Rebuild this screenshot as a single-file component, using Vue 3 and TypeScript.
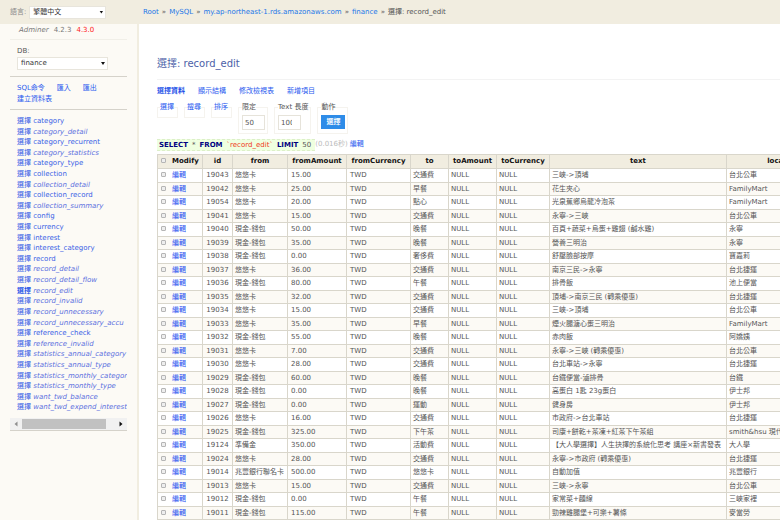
<script setup lang="ts">
import { ref } from 'vue'

interface MenuItem {
  name: string
  view?: boolean
  active?: boolean
}

const menu: MenuItem[] = [
  { name: 'category' },
  { name: 'category_detail', view: true },
  { name: 'category_recurrent' },
  { name: 'category_statistics', view: true },
  { name: 'category_type' },
  { name: 'collection' },
  { name: 'collection_detail', view: true },
  { name: 'collection_record' },
  { name: 'collection_summary', view: true },
  { name: 'config' },
  { name: 'currency' },
  { name: 'interest' },
  { name: 'interest_category' },
  { name: 'record' },
  { name: 'record_detail', view: true },
  { name: 'record_detail_flow', view: true },
  { name: 'record_edit', view: true, active: true },
  { name: 'record_invalid', view: true },
  { name: 'record_unnecessary', view: true },
  { name: 'record_unnecessary_accu', view: true },
  { name: 'reference_check' },
  { name: 'reference_invalid', view: true },
  { name: 'statistics_annual_category', view: true },
  { name: 'statistics_annual_type', view: true },
  { name: 'statistics_monthly_category', view: true },
  { name: 'statistics_monthly_type', view: true },
  { name: 'want_twd_balance', view: true },
  { name: 'want_twd_expend_interest', view: true },
]

const columns = ['id', 'from', 'fromAmount', 'fromCurrency', 'to', 'toAmount', 'toCurrency', 'text', 'location']

type Row = [number, string, string, string, string, string]

const rows: Row[] = [
  [19043, '悠悠卡', '15.00', '交通費', '三峽->頂埔', '台北公車'],
  [19042, '悠悠卡', '25.00', '早餐', '花生夾心', 'FamilyMart'],
  [19054, '悠悠卡', '20.00', '點心', '光泉蕉鄉烏龍冷泡茶', 'FamilyMart'],
  [19041, '悠悠卡', '15.00', '交通費', '永寧->三峽', '台北公車'],
  [19040, '現金-錢包', '50.00', '晚餐', '百頁+蔬菜+烏蛋+雞翅 (鹹水雞)', '永寧'],
  [19039, '現金-錢包', '35.00', '晚餐', '營養三明治', '永寧'],
  [19038, '現金-錢包', '0.00', '奢侈費', '舒壓臉部按摩', '寶嘉莉'],
  [19037, '悠悠卡', '36.00', '交通費', '南京三民->永寧', '台北捷運'],
  [19036, '現金-錢包', '80.00', '午餐', '排骨飯', '池上便當'],
  [19035, '悠悠卡', '32.00', '交通費', '頂埔->南京三民 (轉乘優惠)', '台北捷運'],
  [19034, '悠悠卡', '15.00', '交通費', '三峽->頂埔', '台北公車'],
  [19033, '悠悠卡', '35.00', '早餐', '煙火腿溏心蛋三明治', 'FamilyMart'],
  [19032, '現金-錢包', '55.00', '晚餐', '赤肉飯', '阿嬌姨'],
  [19031, '悠悠卡', '7.00', '交通費', '永寧->三峽 (轉乘優惠)', '台北公車'],
  [19030, '悠悠卡', '28.00', '交通費', '台北車站->永寧', '台北捷運'],
  [19029, '現金-錢包', '60.00', '晚餐', '台鐵便當-滷排骨', '台鐵'],
  [19028, '現金-錢包', '0.00', '晚餐', '高蛋白 1匙 23g蛋白', '伊士邦'],
  [19027, '現金-錢包', '0.00', '運動', '健身房', '伊士邦'],
  [19026, '悠悠卡', '16.00', '交通費', '市政府->台北車站', '台北捷運'],
  [19025, '現金-錢包', '325.00', '下午茶', '司康+餅乾+茶凍+紅茶下午茶組', 'smith&hsu 現代茶館'],
  [19124, '準備金', '350.00', '活動費', '【大人學選擇】人生抉擇的系統化思考 講座×新書發表', '大人學'],
  [19024, '悠悠卡', '28.00', '交通費', '永寧->市政府 (轉乘優惠)', '台北捷運'],
  [19014, '兆豐銀行聯名卡', '500.00', '悠悠卡', '自動加值', '兆豐銀行'],
  [19013, '悠悠卡', '15.00', '交通費', '三峽->永寧', '台北公車'],
  [19012, '現金-錢包', '0.00', '午餐', '家常菜+麵線', '三峽家裡'],
  [19011, '現金-錢包', '115.00', '午餐', '勁辣雞腿堡+可樂+薯條', '麥當勞'],
]

const language = ref('繁體中文')
const database = ref('finance')
const limit = ref('50')
const textLength = ref('100')
</script>

<template>
  <div class="page">
    <header class="top">
      <div class="language">
        <label for="lang">語言:</label>
        <span class="picker">
          <select id="lang" v-model="language">
            <option>繁體中文</option>
            <option>English</option>
          </select>
        </span>
      </div>
      <nav class="crumbs">
        <a href="#">Root</a><span>»</span><a href="#">MySQL</a><span>»</span>
        <a href="#">my.ap-northeast-1.rds.amazonaws.com</a><span>»</span>
        <a href="#">finance</a><span>»</span><span>選擇: record_edit</span>
      </nav>
    </header>

    <div class="body">
      <aside class="side">
        <p class="brand"><a href="#" class="logo">Adminer</a><span>4.2.3</span><a href="#" class="update">4.3.0</a></p>
        <div class="db">
          <label for="db">DB:</label>
          <span class="picker">
            <select id="db" v-model="database">
              <option>finance</option>
            </select>
          </span>
        </div>
        <p class="tools">
          <a href="#">SQL命令</a><a href="#">匯入</a><a href="#">匯出</a><a href="#">建立資料表</a>
        </p>
        <ul class="tables">
          <li v-for="item in menu" :key="item.name" :class="{ view: item.view, active: item.active }">
            <a href="#" class="pick">選擇</a> <a href="#" class="name">{{ item.name }}</a>
          </li>
        </ul>
        <div class="scroll">
          <svg viewBox="0 0 12 12"><path d="M7.5 3.5v5L4.5 6z" fill="#8f8f8f" /></svg>
          <div class="track"><div class="thumb"></div></div>
          <svg viewBox="0 0 12 12"><path d="M4.5 3.5v5L7.5 6z" fill="#111" /></svg>
        </div>
      </aside>

      <main class="content">
        <h1>選擇: record_edit</h1>
        <nav class="links">
          <a href="#" class="current">選擇資料</a><a href="#">顯示結構</a><a href="#">修改檢視表</a><a href="#">新增項目</a>
        </nav>
        <form class="filters" @submit.prevent>
          <fieldset class="closed"><legend><a href="#">選擇</a></legend></fieldset>
          <fieldset class="closed"><legend><a href="#">搜尋</a></legend></fieldset>
          <fieldset class="closed"><legend><a href="#">排序</a></legend></fieldset>
          <fieldset>
            <legend>限定</legend>
            <input v-model="limit" type="text" aria-label="限定" />
          </fieldset>
          <fieldset>
            <legend>Text 長度</legend>
            <input v-model="textLength" class="spin" type="text" aria-label="Text 長度" />
          </fieldset>
          <fieldset>
            <legend>動作</legend>
            <button type="submit">選擇</button>
          </fieldset>
        </form>
        <p class="query">
          <code><b>SELECT</b><span>*</span><b>FROM</b><i>`record_edit`</i><b>LIMIT</b><span>50</span></code>
          <span class="time">(0.016秒)</span>
          <a href="#">編輯</a>
        </p>
        <div class="grid">
          <table>
            <colgroup>
              <col class="w-modify" /><col class="w-id" /><col class="w-from" /><col class="w-amount" />
              <col class="w-currency" /><col class="w-to" /><col class="w-to-amount" /><col class="w-to-currency" />
              <col class="w-text" /><col class="w-location" />
            </colgroup>
            <thead>
              <tr>
                <th class="modify"><input type="checkbox" aria-label="Modify" />Modify</th>
                <th v-for="column in columns" :key="column">{{ column }}</th>
              </tr>
            </thead>
            <tbody>
              <tr v-for="row in rows" :key="row[0]">
                <td><input type="checkbox" :aria-label="String(row[0])" /><a href="#">編輯</a></td>
                <td class="num">{{ row[0] }}</td>
                <td>{{ row[1] }}</td>
                <td class="amount">{{ row[2] }}</td>
                <td class="amount">TWD</td>
                <td>{{ row[3] }}</td>
                <td>NULL</td>
                <td>NULL</td>
                <td>{{ row[4] }}</td>
                <td>{{ row[5] }}</td>
              </tr>
            </tbody>
          </table>
        </div>
      </main>
    </div>
  </div>
</template>

<style>
body {
  margin: 0;
  overflow: hidden;
}
</style>

<style scoped>
.page {
  display: flex;
  flex-direction: column;
  height: 100vh;
  overflow: hidden;
  background: #fff;
  color: #555;
  font: 7px/11px 'DejaVu Sans', 'Noto Sans CJK TC', sans-serif;
}

.page * {
  box-sizing: border-box;
}

a {
  color: #2a5bef;
  text-decoration: none;
}

p,
h1,
ul {
  margin: 0;
  padding: 0;
}

select,
input,
button {
  margin: 0;
  font: inherit;
}

.top {
  display: flex;
  align-items: center;
  flex: none;
  height: 24px;
  background: #f1ede0;
}

.language {
  display: flex;
  align-items: center;
  gap: 3px;
  width: 143px;
  padding-left: 10px;
  color: #888;
}

.picker {
  position: relative;
  display: block;
  width: fit-content;
}

.picker::after {
  content: '';
  position: absolute;
  top: 5px;
  right: 3px;
  width: 4px;
  height: 3px;
  background: #111;
  clip-path: polygon(0 0, 100% 0, 50% 100%);
  pointer-events: none;
}

.picker select {
  display: block;
  width: 77px;
  height: 13px;
  padding: 0 3px;
  border: 1px solid #e8e5dc;
  border-radius: 0;
  background: #fff;
  color: #333;
  appearance: none;
}

.crumbs {
  display: flex;
  gap: 3px;
  white-space: nowrap;
  color: #555;
}

.crumbs a {
  color: #2277e8;
}

.body {
  display: flex;
  flex: 1;
  min-height: 0;
}

.side {
  flex: none;
  width: 139px;
  padding: 0 10px;
  border-right: 2px solid #f1ede0;
  background: #fcfaf5;
}

.brand {
  display: flex;
  gap: 5px;
  height: 16px;
  padding: 1px 0 0 9px;
  border-bottom: 1px solid #f1efe8;
  color: #777;
}

.logo {
  color: #777;
  font-style: italic;
}

.update {
  color: #f22;
}

.db {
  height: 37px;
  padding: 6px 7px 0;
  border-bottom: 1px solid #d5d2ca;
}

.db select {
  width: 91px;
}

.tools {
  display: flex;
  flex-wrap: wrap;
  align-content: flex-start;
  column-gap: 12px;
  height: 33px;
  padding: 6px 7px 0;
  border-bottom: 1px solid #d5d2ca;
}

.tables {
  display: grid;
  grid-auto-rows: 1fr;
  height: 297px;
  margin-top: 6px;
  padding-left: 7px;
  overflow: hidden;
  line-height: 10px;
  list-style: none;
}

.tables li {
  white-space: nowrap;
}

.tables a {
  color: #3a5fe6;
}

.tables .view .name {
  font-style: italic;
  color: #5b6fe0;
}

.tables .active .pick {
  font-weight: bold;
  color: #1a50e8;
}

.scroll {
  display: flex;
  height: 13px;
  margin-top: 5px;
  border-bottom: 1px solid #d5d2ca;
  background: #f1f1f1;
}

.scroll svg {
  width: 12px;
  height: 12px;
}

.track {
  flex: 1;
  padding: 1px 0;
}

.thumb {
  width: 90%;
  height: 10px;
  background: #c1c1c1;
}

.content {
  flex: 1;
  min-width: 0;
  padding: 32px 0 0 18px;
}

h1 {
  height: 24px;
  border-bottom: 1px solid #f3f3f3;
  color: #4c5fa8;
  font-size: 10px;
  font-weight: normal;
  line-height: 15px;
}

.links {
  display: flex;
  gap: 13px;
  padding-top: 6px;
}

.links .current {
  font-weight: bold;
  color: #1a50e8;
}

.filters {
  display: flex;
  align-items: flex-start;
  gap: 6px;
  height: 37px;
  margin-top: 5px;
}

fieldset {
  flex: none;
  min-width: 0;
  height: 32px;
  margin: 0;
  padding: 2px 2px 2px 3px;
  border: 1px solid #f5f3ee;
}

fieldset.closed {
  width: 21px;
  height: 16px;
  padding: 0 2px;
}

legend {
  padding: 0;
  white-space: nowrap;
}

fieldset input {
  display: block;
  width: 23px;
  height: 15px;
  padding: 0 2px;
  border: 1px solid #e6e3da;
  background: #fff;
  color: #555;
}

fieldset .spin {
  padding-right: 8px;
}

button {
  display: block;
  width: 24px;
  height: 14px;
  padding: 0;
  border: 0;
  background: #2e8ce8;
  color: #fff;
  font-weight: bold;
}

.query {
  display: flex;
  height: 12px;
  white-space: nowrap;
}

code {
  display: flex;
  gap: 4px;
  height: 12px;
  padding: 0 4px 0 2px;
  border: 1px dashed #dcefc8;
  border-width: 1px 0;
  background: #efffe0;
  font: inherit;
  line-height: 10px;
}

code b {
  color: #000080;
}

code i {
  color: #f03a20;
  font-style: normal;
}

.time {
  padding-right: 2px;
  color: #bbb;
}

.grid {
  margin-top: 3px;
  overflow: hidden;
}

table {
  width: 682px;
  border-collapse: collapse;
  table-layout: fixed;
  line-height: 11px;
}

.w-modify { width: 45px; }
.w-id { width: 30px; }
.w-from { width: 55px; }
.w-amount { width: 59px; }
.w-currency { width: 64px; }
.w-to { width: 38px; }
.w-to-amount { width: 48px; }
.w-to-currency { width: 53px; }
.w-text { width: 177px; }
.w-location { width: 113px; }

th,
td {
  padding: 0 2px;
  border: 1px solid #d9d6cb;
  text-align: left;
  white-space: nowrap;
}

th {
  height: 14px;
  padding: 0;
  background: #f1ede0;
  color: #111;
  text-align: center;
}

th.modify {
  padding: 0 2px;
  text-align: left;
}

td {
  height: 14px;
}

tbody tr:nth-child(even) td {
  height: 13px;
  background: #fcfaf5;
}

td.num {
  text-align: center;
}

td.amount {
  padding-left: 3px;
}

td a {
  color: #1f4ff0;
}

input[type='checkbox'] {
  width: 5px;
  height: 5px;
  margin: 0 6px 1px 1px;
  border: 1px solid #b5b5b5;
  border-radius: 1px;
  background: #eee;
  appearance: none;
  vertical-align: middle;
}
</style>
